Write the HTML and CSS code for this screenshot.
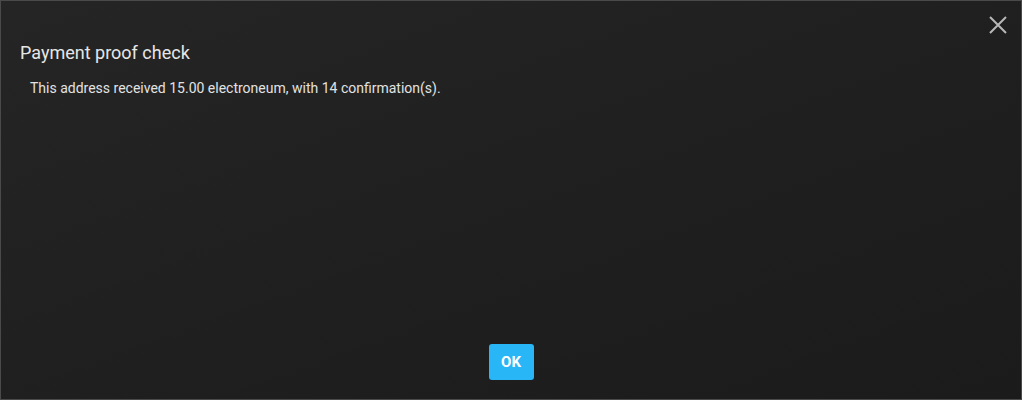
FILE: index.html
```html
<!DOCTYPE html>
<html>
<head>
<meta charset="utf-8">
<link rel="stylesheet" href="styles.css">
</head>
<body>
<div class="dialog">
  <button class="close" aria-label="Close">
    <svg width="18" height="18" viewBox="0 0 18 18"><path d="M1 1 L17 17 M17 1 L1 17" stroke="#b8b8b8" stroke-width="2" fill="none"/></svg>
  </button>
  <div class="title">Payment proof check</div>
  <div class="body">This address received 15.00 electroneum, with 14 confirmation(s).</div>
  <div class="actions"><button class="ok">OK</button></div>
</div>
</body>
</html>
```
FILE: styles.css
```css
html, body { margin: 0; padding: 0; }
body { width: 1022px; height: 400px; background: #1e1e1e; font-family: Roboto, "Liberation Sans", sans-serif; }
.dialog {
  box-sizing: border-box;
  width: 1022px; height: 400px;
  border: 1px solid #4a4a4a;
  background: linear-gradient(160deg, #252525 0%, #1f1f1f 55%, #1b1b1b 100%);
  display: flex; flex-direction: column;
  position: relative;
  padding: 40px 0 19px 19px;
}
.close {
  position: absolute; top: 15px; right: 14px;
  background: none; border: 0; padding: 0; width: 18px; height: 18px; cursor: pointer;
}
.close svg { display: block; }
.title { color: #e6e6e6; font-size: 18px; line-height: 24px; }
.body { color: #e2e2e2; font-size: 14px; line-height: 18px; margin-top: 14px; padding-left: 10px; }
.actions { margin-top: auto; display: flex; justify-content: center; padding-right: 19px; }
.ok {
  width: 45px; height: 36px; border: 0; border-radius: 3px;
  background: #29b6f6; color: #fff; font-family: Roboto, "Liberation Sans", sans-serif;
  font-weight: bold; font-size: 15px; padding: 0;
}
```
